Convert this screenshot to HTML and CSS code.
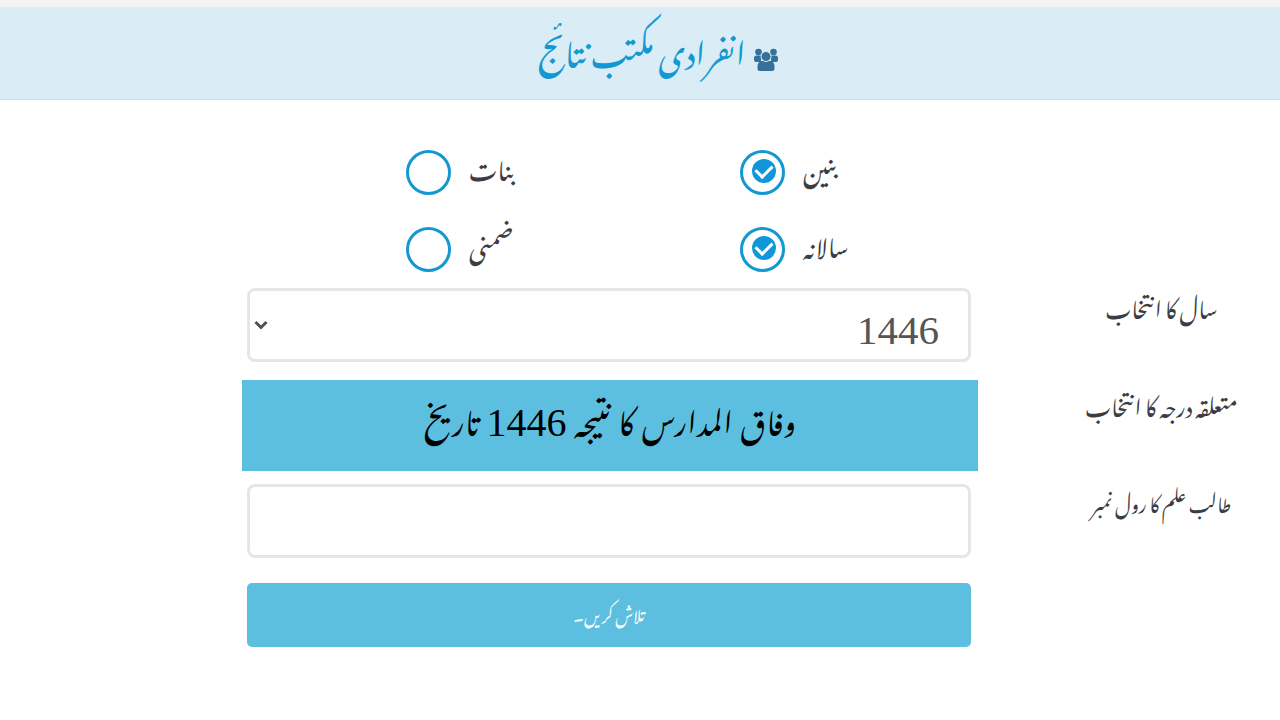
FILE: index.html
```html
<!DOCTYPE html>
<html lang="ur" dir="rtl">
<head>
    <meta charset="UTF-8">
    <meta name="viewport" content="width=device-width, initial-scale=1.0">
    <title>انفرادی مکتب نتائج</title>
    <link rel="stylesheet" href="styles.css">
</head>
<body>

    <header class="page-header">
        <svg class="users-icon" viewBox="0 0 24 24" aria-hidden="true">
            <circle cx="4.500" cy="4" r="3.300"/>
            <circle cx="19.500" cy="4" r="3.300"/>
            <path d="M2 7.500 H7 V14 H2 Q0 14 0 12 V10 Q0 7.500 2 7.500 Z"/>
            <path d="M22 7.500 H17 V14 H22 Q24 14 24 12 V10 Q24 7.500 22 7.500 Z"/>
            <path d="M6 13 H18 Q20.500 15 20.500 19 V20.500 Q20.500 23 18 23 H6 Q3.500 23 3.500 20.500 V19 Q3.500 15 6 13 Z"/>
            <circle class="front" cx="12" cy="8.500" r="5"/>
        </svg>
        <h1>انفرادی مکتب نتائج</h1>
    </header>

    <form class="result-form">
        <div class="options">
            <label class="option">
                <span>بنین</span>
                <input type="radio" name="shoba" value="baneen" checked>
            </label>
            <label class="option">
                <span>بنات</span>
                <input type="radio" name="shoba" value="banat">
            </label>
        </div>
        <div class="options">
            <label class="option">
                <span>سالانہ</span>
                <input type="radio" name="imtihan" value="salana" checked>
            </label>
            <label class="option">
                <span>ضمنی</span>
                <input type="radio" name="imtihan" value="zimni">
            </label>
        </div>

        <div class="row">
            <label class="field-label" for="saal">سال کا انتخاب</label>
            <div class="select-wrap">
                <select class="field" id="saal">
                    <option>1446</option>
                </select>
                <svg class="arrow" viewBox="0 0 14 10" aria-hidden="true">
                    <path d="M1.500 2 L7 7.500 L12.500 2"/>
                </svg>
            </div>
        </div>

        <div class="row banner-row">
            <span class="field-label">متعلقہ درجہ کا انتخاب</span>
            <h2 class="banner">وفاق المدارس کا نتیجہ <span class="year">1446</span> تاریخ</h2>
        </div>

        <div class="row">
            <label class="field-label small" for="roll">طالب علم کا رول نمبر</label>
            <input class="field" type="text" id="roll">
        </div>

        <div class="row submit-row">
            <button class="search-btn" type="button">تلاش کریں۔</button>
        </div>
    </form>

</body>
</html>
```

FILE: styles.css
```css
* {
    box-sizing: border-box;
}
body {
    margin: 0;
    background-color: #fff;
    color: #3c3d42;
    font-family: "Jameel Noori Nastaleeq", "Noto Nastaliq Urdu", "DejaVu Sans", serif;
}
.page-header {
    display: flex;
    align-items: flex-start;
    justify-content: center;
    gap: 8px;
    height: 100px;
    padding-left: 36px;
    background-color: #daecf6;
    border-top: 7px solid #f3f3f3;
    border-bottom: 1px solid #b9e2f1;
}
h1 {
    margin: 0;
    padding-top: 16px;
    font-size: 32px;
    font-weight: normal;
    line-height: 48px;
    color: #1398d2;
}
.users-icon {
    width: 24px;
    height: 24px;
    margin-top: 41px;
    fill: #35719a;
}
.users-icon .front {
    stroke: #daecf6;
    stroke-width: 1;
}
.result-form {
    padding-top: 34px;
}
.options,
.row {
    display: grid;
    grid-template-columns: 309fr 724fr 247fr;
}
.options {
    grid-template-columns: 310fr 230fr 334fr 406fr;
    height: 77px;
    align-items: center;
}
.option {
    display: flex;
    align-items: center;
    justify-content: flex-end;
    gap: 18px;
    font-size: 24px;
    line-height: 30px;
}
.option:first-child {
    grid-column: 2;
}
.option span {
    padding-bottom: 15px;
}
input[type="radio"] {
    appearance: none;
    display: grid;
    place-items: center;
    width: 45px;
    height: 45px;
    margin: 0;
    border: 3px solid #1398d2;
    border-radius: 50%;
    background-color: #fff;
}
input[type="radio"]:checked::before {
    content: "";
    grid-area: 1 / 1;
    width: 24px;
    height: 24px;
    margin-right: 3px;
    margin-bottom: 3px;
    border-radius: 50%;
    background-color: #0f97da;
}
input[type="radio"]:checked::before,
input[type="radio"]:checked::after {
    margin-left: 3px;
    margin-right: 0;
}
input[type="radio"]:checked::after {
    content: "";
    grid-area: 1 / 1;
    width: 13px;
    height: 8px;
    margin-bottom: 7px;
    border-left: 3px solid #fff;
    border-bottom: 3px solid #fff;
    transform: rotate(-45deg);
}
.row {
    margin-bottom: 18px;
}
.field-label {
    margin-left: 72px;
    font-size: 22px;
    line-height: 34px;
    text-align: center;
    white-space: nowrap;
}
.field-label.small {
    font-size: 19px;
}
.select-wrap {
    position: relative;
}
.field {
    display: block;
    width: 100%;
    height: 74px;
    padding: 10px 32px 0;
    appearance: none;
    border: 3px solid #e6e6e6;
    border-radius: 8px;
    background-color: #fff;
    color: #555;
    font-family: "Liberation Serif", "DejaVu Sans", serif;
    font-size: 41px;
}
select.field {
    padding-right: 29px;
}
.arrow {
    position: absolute;
    left: 7px;
    top: 32px;
    width: 14px;
    height: 10px;
    fill: none;
    stroke: #505050;
    stroke-width: 3;
}
.banner-row {
    margin-bottom: 13px;
}
.banner-row .field-label {
    padding-top: 6px;
}
.banner {
    margin: 0 -7px 0 -5px;
    padding: 18px 0 17px;
    background-color: #5dbfdf;
    color: #000;
    font-family: "Liberation Serif", "Jameel Noori Nastaleeq", "Noto Nastaliq Urdu", serif;
    font-size: 30px;
    font-weight: normal;
    line-height: 56px;
    text-align: center;
}
.year {
    font-size: 40px;
    line-height: 40px;
}
.submit-row {
    margin-top: 25px;
}
.search-btn {
    grid-column: 2;
    height: 64px;
    padding-bottom: 6px;
    border: 0;
    border-radius: 5px;
    background-color: #5dbfdf;
    color: #fff;
    font-family: inherit;
    font-size: 16px;
    cursor: pointer;
}
.field:focus,
.search-btn:focus {
    outline: 2px solid #1398d2;
}
```
